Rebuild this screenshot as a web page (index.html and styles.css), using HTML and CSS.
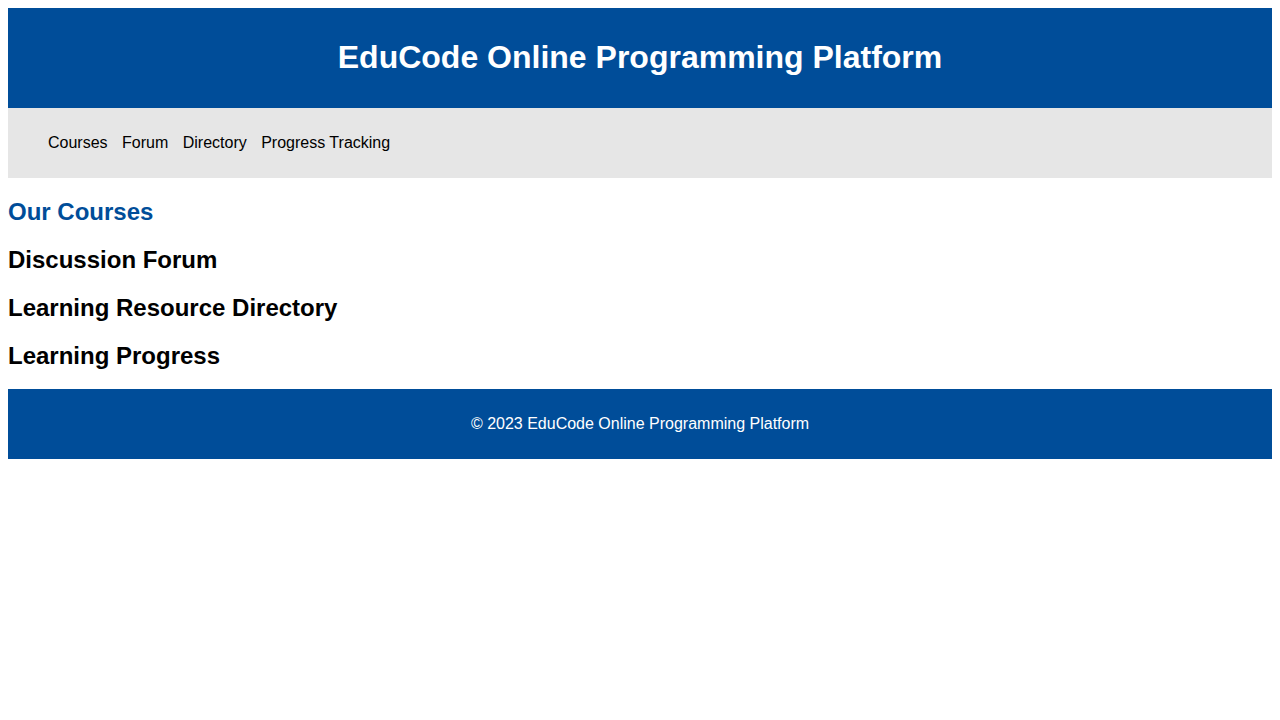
FILE: index.html
```html
<!DOCTYPE html>
<html lang="en">
<head>
<meta charset="utf-8">
<title>EduCode Online Programming Platform</title>
<link rel="stylesheet" href="styles.css">
</head>
<body>
<header class="site-header">
  <h1>EduCode Online Programming Platform</h1>
</header>
<nav class="site-nav">
  <ul class="nav-list">
    <li class="nav-item"><a href="#courses">Courses</a></li>
    <li class="nav-item"><a href="#forum">Forum</a></li>
    <li class="nav-item"><a href="#directory">Directory</a></li>
    <li class="nav-item"><a href="#progress">Progress Tracking</a></li>
  </ul>
</nav>
<main class="content">
  <section id="courses" class="section">
    <h2 class="section-title active">Our Courses</h2>
  </section>
  <section id="forum" class="section">
    <h2 class="section-title">Discussion Forum</h2>
  </section>
  <section id="directory" class="section">
    <h2 class="section-title">Learning Resource Directory</h2>
  </section>
  <section id="progress" class="section">
    <h2 class="section-title">Learning Progress</h2>
  </section>
</main>
<footer class="site-footer">
  <p>&copy; 2023 EduCode Online Programming Platform</p>
</footer>
</body>
</html>
```

FILE: styles.css
```css
body {
  margin: 8px;
  font-family: "Liberation Sans", Arial, sans-serif;
  color: #000;
  background: #fff;
}

.site-header {
  background: #004d99;
  color: #fff;
  padding: 10px;
  text-align: center;
}

.site-header h1 {
  font-size: 32px;
  margin: 21.44px 0;
}

.site-nav {
  background: #e6e6e6;
  padding: 10px 0;
}

.nav-list {
  list-style: none;
  margin: 16px 0;
  padding: 0 0 0 40px;
  font-size: 16px;
}

.nav-item {
  display: inline;
  margin-right: 10px;
}

.nav-item a {
  color: #000;
  text-decoration: none;
}

.section-title {
  font-size: 24px;
  margin: 19.92px 0;
}

.section-title.active {
  color: #004d99;
}

.site-footer {
  background: #004d99;
  color: #fff;
  padding: 10px;
  text-align: center;
}

.site-footer p {
  margin: 16px 0;
  font-size: 16px;
}
```
